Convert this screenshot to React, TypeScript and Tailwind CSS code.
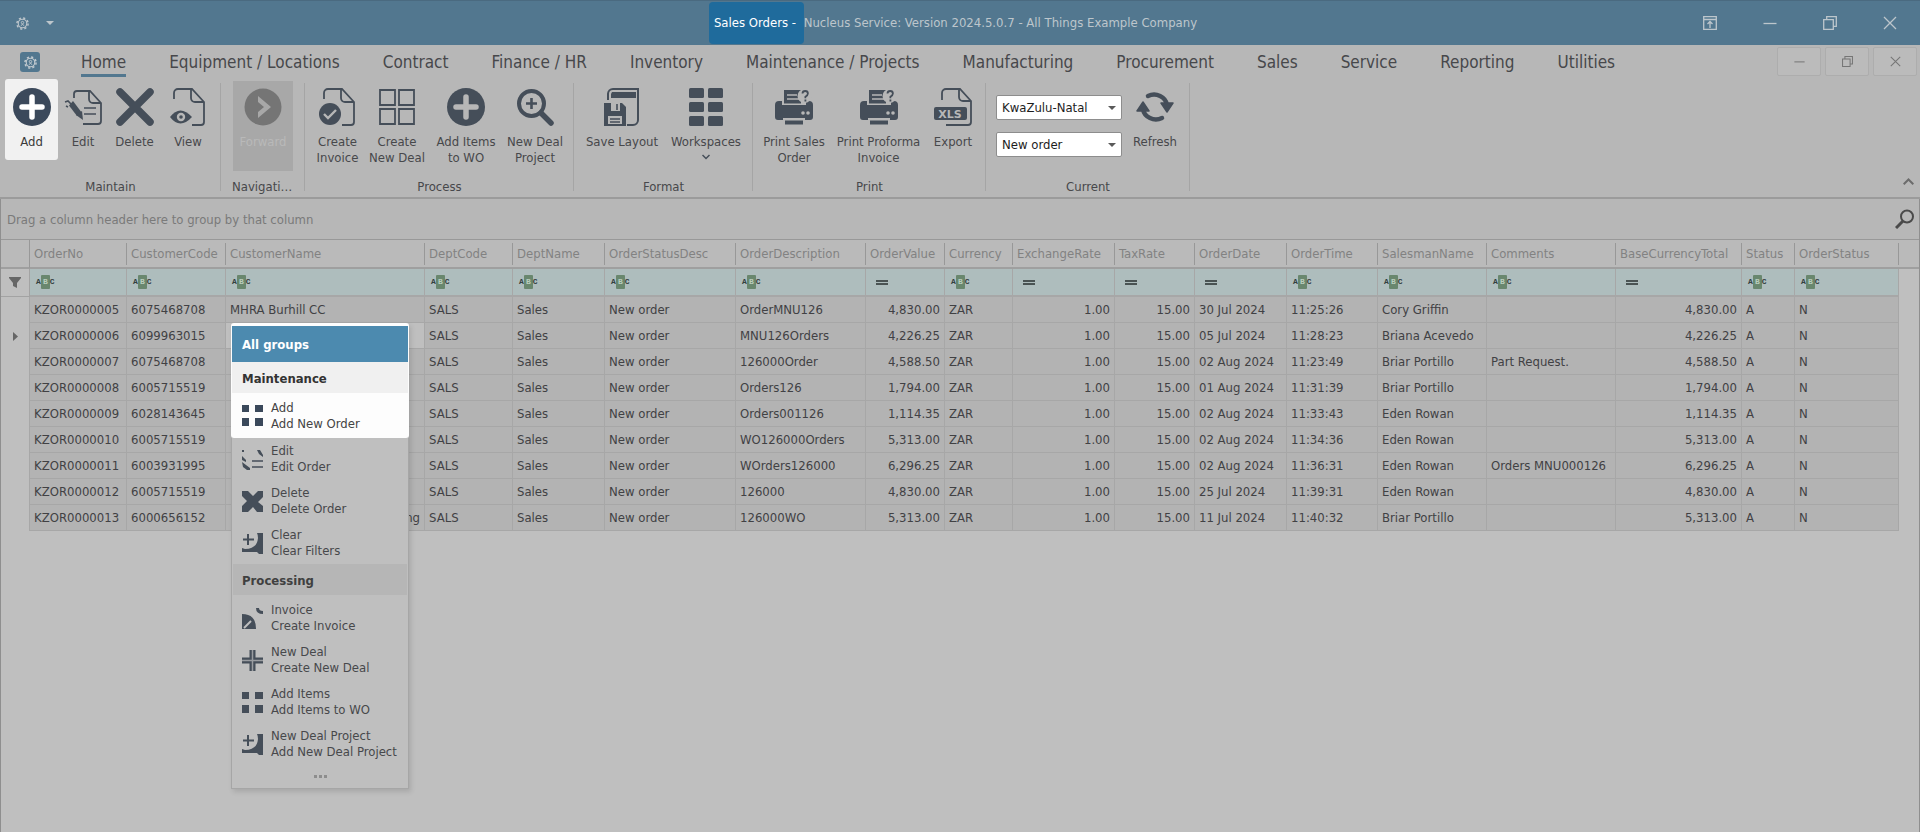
import type { ReactNode } from 'react';
import clsx from 'clsx';

type IconProps = { className?: string };

/* ---------- ribbon icons (38x38) ---------- */

const Svg38 = ({ children, className }: { children: ReactNode; className?: string }) => (
  <svg width="38" height="38" viewBox="0 0 38 38" fill="none" stroke="currentColor" className={className} aria-hidden="true">
    {children}
  </svg>
);

const PageOutline = () => (
  <path d="M5 11V5a4 4 0 0 1 4-4h14l12 13v20a3 3 0 0 1-3 3H23M22 1v9a4 4 0 0 0 4 4h9" strokeWidth="1.8" />
);

const AddIcon = ({ className }: IconProps) => (
  <Svg38 className={className}>
    <circle cx="19" cy="19" r="19" fill="currentColor" stroke="none" />
    <path d="M19 9v20M9 19h20" className="stroke-[#b7b7b7]" strokeWidth="5.5" strokeLinecap="round" />
  </Svg38>
);

const AddIconLit = () => (
  <Svg38>
    <circle cx="19" cy="19" r="19" fill="currentColor" stroke="none" />
    <path d="M19 9v20M9 19h20" className="stroke-white" strokeWidth="5.5" strokeLinecap="round" />
  </Svg38>
);

const EditIcon = () => (
  <Svg38>
    <path d="M10 10V6a3 3 0 0 1 3-3h13l11 12v18a3 3 0 0 1-3 3H19M25 3v8a4 4 0 0 0 4 4h8" strokeWidth="1.8" />
    <path d="M20 20h12M20 26h12" strokeWidth="1.6" />
    <path d="M5 17.500l4-4.500 9 12-5 3z" fill="currentColor" stroke="none" />
    <path d="M1 14l3-1 3 3M2 18l2 1" strokeWidth="1.600" />
    <path d="M12 27l6-4 1 9z" fill="currentColor" stroke="none" />
  </Svg38>
);

const DeleteIcon = () => (
  <Svg38>
    <path d="M4 4l30 30M34 4L4 34" strokeWidth="7.5" strokeLinecap="round" />
  </Svg38>
);

const ViewIcon = () => (
  <Svg38>
    <PageOutline />
    <path d="M1 29q10-13 22 0q-12 13-22 0z" fill="currentColor" stroke="none" />
    <circle cx="12" cy="29" r="4.2" className="fill-[#b7b7b7]" stroke="none" />
    <circle cx="12" cy="29" r="1.8" fill="currentColor" stroke="none" />
  </Svg38>
);

const ForwardIcon = () => (
  <Svg38>
    <circle cx="19" cy="19" r="18.5" fill="currentColor" stroke="none" />
    <path d="M14 8l13 11-13 11v-6l6-5-6-5z" className="fill-[#a8a8a8]" stroke="none" />
  </Svg38>
);

const InvoiceIcon = () => (
  <Svg38>
    <PageOutline />
    <circle cx="11" cy="26" r="11" fill="currentColor" stroke="none" />
    <path d="M5 26l4 4 8-8" className="stroke-[#b7b7b7]" strokeWidth="2.4" />
  </Svg38>
);

const NewDealIcon = () => (
  <Svg38>
    <path d="M2 2h15v15H2zM21 2h15v15H21zM2 21h15v15H2zM21 21h15v15H21z" strokeWidth="1.8" />
  </Svg38>
);

const ProjectIcon = () => (
  <Svg38>
    <circle cx="15.500" cy="15.500" r="12.500" strokeWidth="4" />
    <path d="M15.500 10v11M10 15.500h11" strokeWidth="2.600" />
    <path d="M25 25l10 10" strokeWidth="5.500" strokeLinecap="round" />
  </Svg38>
);

const SaveLayoutIcon = () => (
  <Svg38>
    <path d="M5 12V6a5 5 0 0 1 5-5h25v31a5 5 0 0 1-5 5h-6" strokeWidth="2" />
    <path d="M9 4h24v6H8V6z" fill="currentColor" stroke="none" />
    <path d="M1 15h18l4 4v19H1z" fill="currentColor" stroke="none" />
    <path d="M8 15h9v8H8zM5 28h14v8H5z" className="fill-[#b7b7b7]" stroke="none" />
    <path d="M14 16v6M7 31h10M7 34h10" strokeWidth="1.6" />
  </Svg38>
);

const WorkspacesIcon = () => (
  <Svg38 className="fill-current stroke-none">
    {[0, 14, 28].map((y) => (
      <g key={y}>
        <rect x="2" y={y} width="15" height="10" rx="1.5" />
        <rect x="21" y={y} width="15" height="10" rx="1.5" />
      </g>
    ))}
  </Svg38>
);

const PrintIcon = () => (
  <Svg38>
    <path d="M4 13h3v4h24v-4h3a4 4 0 0 1 4 4v12a3 3 0 0 1-3 3H3a3 3 0 0 1-3-3V17a4 4 0 0 1 4-4z" fill="currentColor" stroke="none" />
    <path d="M9 2h17v13.500H9z" fill="currentColor" stroke="none" />
    <path d="M12 7h10M12 11h12" className="stroke-[#b7b7b7]" strokeWidth="1.4" />
    <path d="M8 30h22v3H8z" className="fill-[#b7b7b7]" stroke="none" />
    <path d="M10 32.500h18v4H10z" fill="currentColor" stroke="none" />
    <circle cx="29.500" cy="8" r="7" className="fill-[#b7b7b7]" stroke="none" />
    <path d="M27.500 5.500q0-2.500 2.700-2.500t2.700 2.500q0 1.700-2.500 3.300v1.400M30.400 11.500v2" strokeWidth="1.800" />
    <circle cx="28" cy="25" r="1.8" className="fill-[#b7b7b7]" stroke="none" />
    <circle cx="33" cy="25" r="1.8" className="fill-[#b7b7b7]" stroke="none" />
  </Svg38>
);

const ExportIcon = () => (
  <Svg38>
    <path d="M8 12V5a4 4 0 0 1 4-4h14l11 12v21a3 3 0 0 1-3 3H12M25 1v8a4 4 0 0 0 4 4h8" strokeWidth="1.8" />
    <rect x="0" y="19" width="33" height="13" rx="2" fill="currentColor" stroke="none" />
    <text x="16" y="30" textAnchor="middle" className="fill-[#b7b7b7] stroke-none font-['DejaVu_Sans',sans-serif] text-[11px] font-bold">XLS</text>
  </Svg38>
);

const RefreshIcon = () => (
  <Svg38>
    <path d="M12 8a13 12 0 0 1 19 9" strokeWidth="4.500" strokeLinecap="round" />
    <path d="M26 30A13 12 0 0 1 7 21" strokeWidth="4.500" strokeLinecap="round" />
    <path d="M25 15h12l-6 9zM1 23h12l-6-9z" fill="currentColor" strokeWidth="1.500" strokeLinejoin="round" />
  </Svg38>
);

/* ---------- small icons ---------- */

const GearIcon = ({ className }: IconProps) => (
  <svg viewBox="0 0 14 14" fill="none" stroke="currentColor" className={className} aria-hidden="true">
    <circle cx="7" cy="7" r="6" strokeWidth="1.600" strokeDasharray="2.360 2.350" />
    <circle cx="7" cy="7" r="4.600" strokeWidth="1.200" />
    <circle cx="7" cy="6" r="1.300" strokeWidth="1" />
    <path d="M5.500 9.500L7 7.500l1.500 2" strokeWidth="1" />
  </svg>
);

const CaretIcon = ({ className }: IconProps) => (
  <svg width="8" height="4" viewBox="0 0 8 4" className={className} aria-hidden="true">
    <path d="M0 0h8L4 4z" fill="currentColor" />
  </svg>
);

const WindowGlyph = ({ kind, size }: { kind: string; size: number }) => (
  <svg width={size} height={size} viewBox="0 0 14 14" fill="none" stroke="currentColor" strokeWidth="1.3" aria-hidden="true">
    {kind === 'pin' && <path d="M.7.7h12.600v12.600H.7zM.7 3.500h12.600M7 12V6M4.500 8L7 5.500 9.500 8" />}
    {kind === 'min' && <path d="M.5 7.500h13" />}
    {kind === 'max' && <path d="M.7 3.700h9.600v9.600H.7zM3.700 3.500V.7h9.600v9.600h-3" />}
    {kind === 'close' && <path d="M1 1l12 12M13 1L1 13" />}
  </svg>
);

const SearchIcon = () => (
  <svg width="20" height="20" viewBox="0 0 20 20" fill="none" stroke="currentColor" aria-hidden="true">
    <circle cx="12" cy="7.500" r="6" strokeWidth="2" />
    <path d="M8 12l-7 7" strokeWidth="3" />
  </svg>
);

const TextFilterIcon = () => (
  <span className="flex items-center font-['Liberation_Mono',monospace] text-[8px] leading-[14px] font-bold text-[#33403f]">
    A<span className="w-[9px] rounded-[1px] bg-[#69876e] text-center text-[#b9cdbd]">B</span>C
  </span>
);

const EqualsFilterIcon = () => (
  <svg width="12" height="5" viewBox="0 0 12 5" className="ml-1 text-[#4a5353]" aria-hidden="true">
    <path d="M0 0h12v2H0zM0 3h12v2H0z" fill="currentColor" />
  </svg>
);

/* ---------- popup menu icons (21x21) ---------- */

const MENU_ICONS: Record<string, ReactNode> = {
  squares: <path d="M0 0h7v7H0zM13 0h8v7h-8zM0 13h7v8H0zM13 13h8v8h-8z" fill="currentColor" stroke="none" />,
  edit: (
    <>
      <path d="M0 1h2v2H0zM0 7l4 4v2L0 11zM0 13l8 6v2H5L1 18zM15 1h3l3 5v2l-4-3z" fill="currentColor" stroke="none" />
      <path d="M10 12h11M10 18h11" strokeWidth="1.5" />
    </>
  ),
  delete: <path d="M0 0h6l5 5 5-5h5v6l-5 5 5 4v6h-6l-4-5-5 5H0v-6l5-5-5-5z" fill="currentColor" stroke="none" />,
  zoom: (
    <>
      <path d="M6 1v11M1 6.500h11" strokeWidth="2" />
      <path d="M15 0h6v21h-4l-2-2H0v-4l3 1q12 0 13-11 0-3-1-5z" fill="currentColor" stroke="none" />
    </>
  ),
  invoice: (
    <>
      <path d="M0 6q14 0 14 15H0z" fill="currentColor" stroke="none" />
      <path d="M2 20l7-7" className="stroke-[#bfbfbf]" strokeWidth="2" />
      <path d="M14 0h3q0 3 4 3v3q-7 0-7-6z" fill="currentColor" stroke="none" />
    </>
  ),
  cross: (
    <>
      <path d="M10.500 0v21M0 10.500h21" strokeWidth="6" />
      <path d="M10.500 0v21M0 10.500h21" className="stroke-[#9a9da1]" strokeWidth="1.500" />
    </>
  ),
};

/* ---------- data ---------- */

const TABS = [
  'Home', 'Equipment / Locations', 'Contract', 'Finance / HR', 'Inventory', 'Maintenance / Projects',
  'Manufacturing', 'Procurement', 'Sales', 'Service', 'Reporting', 'Utilities',
];

type Column = { name: string; width: string; numeric?: boolean; filter?: 'eq' };

const COLUMNS: Column[] = [
  { name: 'OrderNo', width: 'w-[97px]' },
  { name: 'CustomerCode', width: 'w-[99px]' },
  { name: 'CustomerName', width: 'w-[199px]' },
  { name: 'DeptCode', width: 'w-[88px]' },
  { name: 'DeptName', width: 'w-[92px]' },
  { name: 'OrderStatusDesc', width: 'w-[131px]' },
  { name: 'OrderDescription', width: 'w-[130px]' },
  { name: 'OrderValue', width: 'w-[79px]', numeric: true, filter: 'eq' },
  { name: 'Currency', width: 'w-[68px]' },
  { name: 'ExchangeRate', width: 'w-[102px]', numeric: true, filter: 'eq' },
  { name: 'TaxRate', width: 'w-[80px]', numeric: true, filter: 'eq' },
  { name: 'OrderDate', width: 'w-[92px]', filter: 'eq' },
  { name: 'OrderTime', width: 'w-[91px]' },
  { name: 'SalesmanName', width: 'w-[109px]' },
  { name: 'Comments', width: 'w-[129px]' },
  { name: 'BaseCurrencyTotal', width: 'w-[126px]', numeric: true, filter: 'eq' },
  { name: 'Status', width: 'w-[53px]' },
  { name: 'OrderStatus', width: 'w-[104px]' },
];

// orderNo, customerCode, customerName, description, value, date, time, salesman, comments
const ORDERS = [
  ['KZOR0000005', '6075468708', 'MHRA Burhill CC', 'OrderMNU126', '4,830.00', '30 Jul 2024', '11:25:26', 'Cory Griffin', ''],
  ['KZOR0000006', '6099963015', '', 'MNU126Orders', '4,226.25', '05 Jul 2024', '11:28:23', 'Briana Acevedo', ''],
  ['KZOR0000007', '6075468708', '', '126000Order', '4,588.50', '02 Aug 2024', '11:23:49', 'Briar Portillo', 'Part Request.'],
  ['KZOR0000008', '6005715519', '', 'Orders126', '1,794.00', '01 Aug 2024', '11:31:39', 'Briar Portillo', ''],
  ['KZOR0000009', '6028143645', '', 'Orders001126', '1,114.35', '02 Aug 2024', '11:33:43', 'Eden Rowan', ''],
  ['KZOR0000010', '6005715519', '', 'WO126000Orders', '5,313.00', '02 Aug 2024', '11:34:36', 'Eden Rowan', ''],
  ['KZOR0000011', '6003931995', '', 'WOrders126000', '6,296.25', '02 Aug 2024', '11:36:31', 'Eden Rowan', 'Orders MNU000126'],
  ['KZOR0000012', '6005715519', '', '126000', '4,830.00', '25 Jul 2024', '11:39:31', 'Eden Rowan', ''],
  ['KZOR0000013', '6000656152', 'ng', '126000WO', '5,313.00', '11 Jul 2024', '11:40:32', 'Briar Portillo', ''],
];

const toCells = ([no, code, name, desc, value, date, time, salesman, comments]: string[]) => [
  no, code, name, 'SALS', 'Sales', 'New order', desc, value, 'ZAR', '1.00', '15.00', date, time, salesman, comments, value, 'A', 'N',
];

const MAINTENANCE = [
  { title: 'Edit', text: 'Edit Order', icon: 'edit' },
  { title: 'Delete', text: 'Delete Order', icon: 'delete' },
  { title: 'Clear', text: 'Clear Filters', icon: 'zoom' },
];

const PROCESSING = [
  { title: 'Invoice', text: 'Create Invoice', icon: 'invoice' },
  { title: 'New Deal', text: 'Create New Deal', icon: 'cross' },
  { title: 'Add Items', text: 'Add Items to WO', icon: 'squares' },
  { title: 'New Deal Project', text: 'Add New Deal Project', icon: 'zoom' },
];

/* ---------- parts ---------- */

function RibbonButton({ icon, label, width, children }: { icon: ReactNode; label: string; width: string; children?: ReactNode }) {
  return (
    <button type="button" className={clsx('flex shrink-0 flex-col items-center pt-[9px] text-[#454e59]', width)}>
      {icon}
      <span className="mt-2 text-center leading-4 whitespace-pre-line text-[#47484b]">{label}</span>
      {children}
    </button>
  );
}

function RibbonGroup({ caption, children, className }: { caption: string; children: ReactNode; className?: string }) {
  return (
    <section className="relative flex h-[118px] shrink-0 flex-col">
      <div className={clsx('flex flex-1 items-start', className)}>{children}</div>
      <h2 className="mx-[11px] mb-[2px] w-0 min-w-[calc(100%-22px)] truncate text-center leading-4 text-[#47484b]">{caption}</h2>
      <span className="absolute top-1 right-0 h-[108px] w-px bg-[#a5a5a5]" />
    </section>
  );
}

function RibbonSelect({ label, value, options }: { label: string; value: string; options: string[] }) {
  return (
    <div className="relative">
      <select
        aria-label={label}
        defaultValue={value}
        className="block h-[25px] w-[126px] appearance-none rounded-[2px] border border-[#8d8d8d] bg-white pr-4 pl-[5px] leading-[23px] text-[#1d1d1d] outline-none"
      >
        {options.map((o) => <option key={o}>{o}</option>)}
      </select>
      <CaretIcon className="pointer-events-none absolute top-[11px] right-[6px] text-[#5a5a5a]" />
    </div>
  );
}

function MenuItem({ title, text, icon, lit }: { title: string; text: string; icon: string; lit?: boolean }) {
  return (
    <button
      type="button"
      className={clsx('flex w-full items-center gap-2 pl-[10px] text-left leading-4', lit ? 'h-[45px] text-[#3b495b]' : 'h-[42px] text-[#454e59]')}
    >
      <svg width="21" height="21" viewBox="0 0 21 21" fill="none" stroke="currentColor" className="shrink-0" aria-hidden="true">
        {MENU_ICONS[icon]}
      </svg>
      <span className={clsx('whitespace-nowrap', lit ? 'text-[#444]' : 'text-[#47484b]')}>{title}<br />{text}</span>
    </button>
  );
}

function GroupsMenu() {
  return (
    <nav className="absolute top-[84px] left-[230px] w-[178px] shadow-[2px_3px_5px_rgba(0,0,0,0.12)]" aria-label="All groups">
      <div className="rounded-[3px] bg-[#fdfdfd] px-px pt-[3px]">
        <h3 className="flex h-9 items-center bg-[#4c8aaf] pt-[2px] pl-[10px] font-bold text-white">All groups</h3>
        <h4 className="flex h-[31px] items-center bg-[#f0f0f0] pt-[2px] pl-[10px] font-bold text-[#333]">Maintenance</h4>
        <MenuItem title="Add" text="Add New Order" icon="squares" lit />
      </div>
      <div className="border-x border-b border-[#a6a6a6] bg-[#bfbfbf]">
        {MAINTENANCE.map((m) => <MenuItem key={m.title} {...m} />)}
        <h4 className="mx-px flex h-[31px] items-center bg-[#b6b6b6] pt-[2px] pl-[9px] font-bold text-[#404040]">Processing</h4>
        <div className="pt-[2px]">
          {PROCESSING.map((m) => <MenuItem key={m.title} {...m} />)}
        </div>
        <button type="button" aria-label="More" className="flex h-[23px] w-full items-center justify-center gap-[2px]">
          <i className="size-[3px] bg-[#8d8d8d]" /><i className="size-[3px] bg-[#8d8d8d]" /><i className="size-[3px] bg-[#8d8d8d]" />
        </button>
      </div>
    </nav>
  );
}

function OrdersTable() {
  return (
    <table className="w-full table-fixed border-separate border-spacing-0 text-left whitespace-nowrap text-[#414144]">
      <colgroup>
        <col className="w-[29px]" />
        {COLUMNS.map((c) => <col key={c.name} className={c.width} />)}
        <col />
      </colgroup>
      <thead>
        <tr className="h-[30px] bg-[#bababa] text-[#828282]">
          <th className="border-t border-r border-b-2 border-t-[#989898] border-r-[#989898] border-b-[#9f9f9f]" aria-label="Row" />
          {COLUMNS.map((c) => (
            <th key={c.name} className="border-t border-b-2 border-t-[#989898] border-b-[#9f9f9f] p-0 font-normal">
              <div className="h-[22px] overflow-hidden border-r border-[#989898] pl-1 leading-[22px]">{c.name}</div>
            </th>
          ))}
          <th className="border-t border-b-2 border-t-[#989898] border-b-[#9f9f9f]" aria-label="Spare" />
        </tr>
        <tr className="h-7">
          <td className="border-r border-b border-r-[#a3a3a3] border-b-[#a3a3a3] p-0">
            <svg width="12" height="11" viewBox="0 0 12 11" className="mx-auto text-[#666]" aria-hidden="true">
              <path d="M0 0h12v1L8 6v5l-4-2V6L0 1z" fill="currentColor" />
            </svg>
          </td>
          {COLUMNS.map((c) => (
            <td key={c.name} className="border-r border-b-2 border-[#a7a7a7] bg-[#aebdbd] p-0">
              <button type="button" aria-label={`Filter ${c.name}`} className="ml-[6px] block">
                {c.filter === 'eq' ? <EqualsFilterIcon /> : <TextFilterIcon />}
              </button>
            </td>
          ))}
          <td />
        </tr>
      </thead>
      <tbody>
        {ORDERS.map((order, r) => (
          <tr key={order[0]} className="h-[26px]">
            <td className="border-r border-[#a7a7a7] p-0">
              {r === 1 && (
                <svg width="5" height="9" viewBox="0 0 5 9" className="mx-auto text-[#666]" aria-hidden="true">
                  <path d="M0 0l5 4.500L0 9z" fill="currentColor" />
                </svg>
              )}
            </td>
            {toCells(order).map((text, i) => (
              <td
                key={COLUMNS[i].name}
                className={clsx(
                  'overflow-hidden border-r border-b border-[#a7a7a7] px-1 py-0 leading-[25px]',
                  (COLUMNS[i].numeric || (r === 8 && i === 2)) && 'text-right',
                  r === 1 && i === 2 ? 'bg-[#bfbfbf]' : 'bg-[#b3b3b3]',
                )}
              >
                {text}
              </td>
            ))}
            <td />
          </tr>
        ))}
      </tbody>
    </table>
  );
}

export default function App() {
  return (
    <div className="flex min-h-screen flex-col overflow-x-hidden bg-[#b7b7b7] font-['DejaVu_Sans_Condensed','DejaVu_Sans',sans-serif] text-[13px]">
      <header className="grid h-[45px] grid-cols-[1fr_auto_1fr] items-center border-t border-[#4a6a80] bg-[#52778f] text-[#bdc6cc]">
        <div className="flex items-center gap-[17px] pl-4">
          <GearIcon className="size-[13px]" />
          <CaretIcon />
        </div>
        <h1 className="flex items-center pr-[14px] whitespace-pre">
          <span className="flex h-[42px] items-center rounded bg-[#1f6b9c] pr-1 pl-[5px] text-white">Sales Orders - </span>
          Nucleus Service: Version 2024.5.0.7 - All Things Example Company
        </h1>
        <div className="flex justify-end">
          {['pin', 'min', 'max', 'close'].map((k) => (
            <button key={k} type="button" aria-label={k} className="flex h-11 w-[60px] items-center justify-center">
              <WindowGlyph kind={k} size={14} />
            </button>
          ))}
        </div>
      </header>

      <div className="flex h-[34px] items-start pl-5">
        <span className="mt-[7px] flex size-5 shrink-0 items-center justify-center rounded-[3px] bg-[#52778f] text-[#c3cbd0]">
          <GearIcon className="size-[13px]" />
        </span>
        <nav className="ml-[41px] flex shrink-0 gap-[43px] text-[17px] text-[#47484b]">
          {TABS.map((t, i) => (
            <a key={t} href="#" className={clsx('h-8 border-b-[3px] pt-[6px] leading-[23px]', i === 0 ? 'border-[#52778f]' : 'border-transparent')}>
              {t}
            </a>
          ))}
        </nav>
        <div className="mt-[2px] mr-[3px] ml-auto flex shrink-0 gap-1 text-[#757575]">
          {['min', 'max', 'close'].map((k) => (
            <button key={k} type="button" aria-label={`${k} document`} className="flex h-[29px] w-11 items-center justify-center rounded-[2px] border border-[#adadad] bg-[#bbb]">
              <WindowGlyph kind={k} size={11} />
            </button>
          ))}
        </div>
      </div>

      <div className="flex border-b-2 border-[#9b9b9b]">
        <RibbonGroup caption="Maintain" className="pr-[6px] pl-[5px]">
          <button type="button" className="flex h-[81px] w-[53px] flex-col items-center rounded-[3px] bg-[#f1f1f1] pt-[9px] text-[#3b495b]">
            <AddIconLit />
            <span className="mt-2 leading-4 text-[#3a3a3a]">Add</span>
          </button>
          <RibbonButton icon={<EditIcon />} label="Edit" width="w-[50px]" />
          <RibbonButton icon={<DeleteIcon />} label="Delete" width="w-[53px]" />
          <RibbonButton icon={<ViewIcon />} label="View" width="w-[54px]" />
        </RibbonGroup>
        <RibbonGroup caption="Navigation" className="px-3">
          <button type="button" disabled className="mt-[2px] flex h-[90px] w-[60px] flex-col items-center bg-[#a8a8a8] pt-[7px] text-[#757575]">
            <ForwardIcon />
            <span className="mt-2 leading-4 text-[#b9b9b9]">Forward</span>
          </button>
        </RibbonGroup>
        <RibbonGroup caption="Process" className="px-[6px]">
          <RibbonButton icon={<InvoiceIcon />} label={'Create\nInvoice'} width="w-[53px]" />
          <RibbonButton icon={<NewDealIcon />} label={'Create\nNew Deal'} width="w-[66px]" />
          <RibbonButton icon={<AddIcon />} label={'Add Items\nto WO'} width="w-[72px]" />
          <RibbonButton icon={<ProjectIcon />} label={'New Deal\nProject'} width="w-[66px]" />
        </RibbonGroup>
        <RibbonGroup caption="Format" className="pr-[6px] pl-[5px]">
          <RibbonButton icon={<SaveLayoutIcon />} label="Save Layout" width="w-[86px]" />
          <RibbonButton icon={<WorkspacesIcon />} label="Workspaces" width="w-[82px]">
            <svg width="8" height="6" viewBox="0 0 8 6" fill="none" stroke="currentColor" strokeWidth="1.500" className="mt-1" aria-hidden="true">
              <path d="M.5 1L4 4.500 7.500 1" />
            </svg>
          </RibbonButton>
        </RibbonGroup>
        <RibbonGroup caption="Print" className="pr-[7px] pl-[5px]">
          <RibbonButton icon={<PrintIcon />} label={'Print Sales\nOrder'} width="w-[72px]" />
          <RibbonButton icon={<PrintIcon />} label={'Print Proforma\nInvoice'} width="w-[97px]" />
          <RibbonButton icon={<ExportIcon />} label="Export" width="w-[52px]" />
        </RibbonGroup>
        <RibbonGroup caption="Current" className="pr-[7px] pl-[10px]">
          <div className="mt-4 mr-[5px] flex flex-col gap-3">
            <RibbonSelect label="Province" value="KwaZulu-Natal" options={['KwaZulu-Natal', 'Gauteng']} />
            <RibbonSelect label="Order status" value="New order" options={['New order', 'Closed']} />
          </div>
          <RibbonButton icon={<RefreshIcon />} label="Refresh" width="w-[56px]" />
        </RibbonGroup>
        <button type="button" aria-label="Collapse ribbon" className="mr-[6px] mb-[12px] ml-auto self-end text-[#6c6c6c]">
          <svg width="11" height="7" viewBox="0 0 11 7" fill="none" stroke="currentColor" strokeWidth="2" aria-hidden="true">
            <path d="M.7 6.300L5.500 1.500l4.800 4.800" />
          </svg>
        </button>
      </div>

      <main className="flex flex-1 flex-col border-x border-[#8f8f8f]">
        <div className="flex h-10 items-center justify-between pr-1 pl-[6px] text-[#7a7a7a]">
          <span className="pt-px">Drag a column header here to group by that column</span>
          <button type="button" aria-label="Search" className="text-[#4a4a4a]"><SearchIcon /></button>
        </div>
        <div className="relative flex-1 bg-[#bfbfbf]">
          <OrdersTable />
          <GroupsMenu />
        </div>
      </main>
    </div>
  );
}
